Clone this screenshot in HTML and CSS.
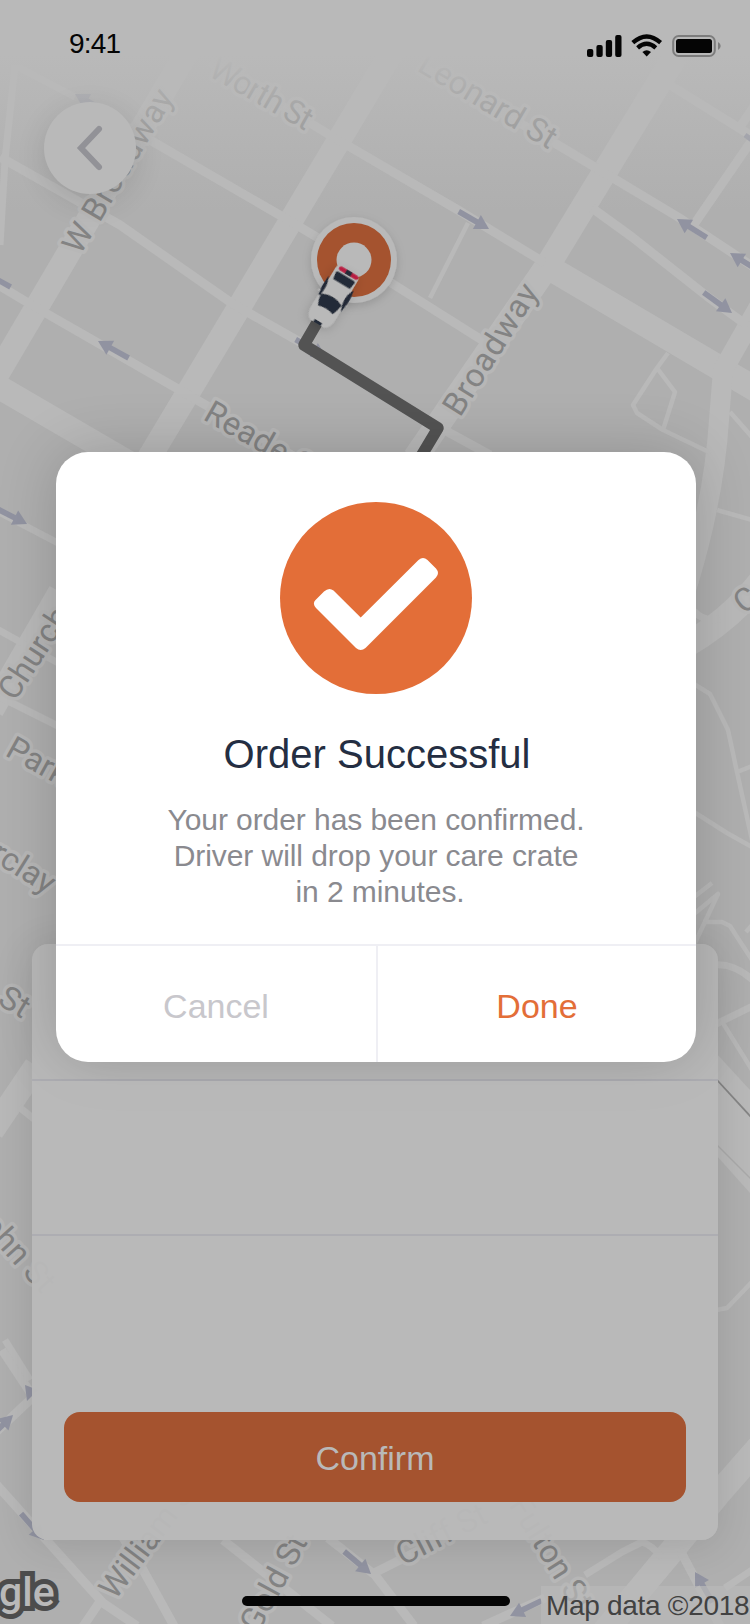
FILE: index.html
```html
<!DOCTYPE html>
<html lang="en">
<head>
<meta charset="utf-8">
<title>Order Successful</title>
<link rel="stylesheet" href="styles.css">
</head>
<body>
<div class="screen">
  <svg class="map" viewBox="0 0 750 1624" width="750" height="1624" aria-hidden="true">
    <defs>
      <g id="arrow"><path d="M-35 0H-10" stroke="#9193a1" stroke-width="5.6"/><path d="M0 0L-14 -8V8Z" fill="#9193a1"/></g>
      <linearGradient id="fade" x1="0" y1="0" x2="0" y2="1">
        <stop offset="0" stop-color="#b9b9b9"/><stop offset=".26" stop-color="#b9b9b9"/><stop offset="1" stop-color="#b9b9b9" stop-opacity="0"/>
      </linearGradient>
      <filter id="soft" x="-30%" y="-30%" width="160%" height="160%"><feDropShadow dx="0" dy="3" stdDeviation="5" flood-opacity=".15"/></filter>
    </defs>
    <rect width="750" height="1624" fill="#afafaf"/>
    <g class="roads">
      <path stroke-width="24" d="M190 47L-15 395M396 45L140 473M-20 376L150 475M60 592L-8 710M36 1066L-8 1131"/>
      <path stroke-width="25" d="M676 55L548 265L415 458M548 267L760 392M760 1446L718 1494L675 1547L600 1637"/>
      <path stroke-width="20" d="M765 296L723 370L719 420Q714 500 686 590"/>
      <path stroke-width="25" d="M685 646Q730 620 760 582"/>
      <path stroke-width="9" d="M0 157L120 225L233 304L300 342L448 432L490 455M85 103L150 140L283 217L330 245M385 279L485 342M-5 283L30 304L185 393L300 460M210 62L333 137L458 210L545 263M418 65L558 145L678 217L755 268M592 208L632 237L708 297L748 326M670 85L755 138M752 140L695 223M755 105L738 130M-5 1483L103 1603L137 1626M101 1600L82 1628M142 1568L174 1626M223 1540L332 1626M328 1538L375 1575L414 1626M372 1574L490 1515M680 1550L720 1626M483 1626L545 1598M2 1350L34 1398M-4 1432L32 1398"/>
      <path stroke-width="7" d="M15 65L5 160L0 245M18 67L75 97M-5 510L58 543M-5 628L60 664M0 697L60 727M5 1340L30 1380M19 1107L34 1119M715 965Q735 963 756 983M716 1024L755 1005M694 611Q703 622 720 619M725 1588L755 1568M122 1538L145 1572M585 1575L622 1552L642 1542Q652 1545 662 1558"/>
      <path stroke-width="4.5" d="M468 223L430 298M668 353L657 368L633 405L637 413L663 430L711 453M657 368L675 392L663 430M730 412L752 437M717 510L752 520M694 684L710 694L728 730L737 772L752 840M737 772L752 766M694 812L727 833L752 847M694 897L712 883M694 914L718 894L694 945M703 922H722L730 926L752 960M746 932L752 925M721 1020L752 1070M716 1310L727 1308L752 1282"/>
      <path stroke="none" fill="#b9b9b9" d="M716 1053L750 1090V1193L716 1155Z"/>
    </g>
    <path d="M717 1080L751 1117" stroke="#858585" stroke-width="1.8"/>
    <path d="M717 1145L751 1179" stroke="#a9a9a9" stroke-width="1.5"/>
    <g>
      <use href="#arrow" transform="translate(489 229) rotate(30)"/>
      <use href="#arrow" transform="translate(677 219) rotate(212)"/>
      <use href="#arrow" transform="translate(730 253) rotate(212)"/>
      <use href="#arrow" transform="translate(732 313) rotate(36)"/>
      <use href="#arrow" transform="translate(98 341) rotate(209)"/>
      <use href="#arrow" transform="translate(-20 270) rotate(209)"/>
      <use href="#arrow" transform="translate(27 524) rotate(27)"/>
      <use href="#arrow" transform="translate(75 94) rotate(210)"/>
      <use href="#arrow" transform="translate(326 357) rotate(30)"/>
      <use href="#arrow" transform="translate(371 1574) rotate(40)"/>
      <use href="#arrow" transform="translate(510 1616) rotate(154)"/>
      <use href="#arrow" transform="translate(695 1572) rotate(240)"/>
      <use href="#arrow" transform="translate(13 1415) rotate(-44)"/>
      <use href="#arrow" transform="translate(44 1540) rotate(49)"/>
      <path d="M25 1385L38 1390L27 1401Z" fill="#9193a1"/>
      <path d="M745 135L752 140" stroke="#9193a1" stroke-width="5"/>
    </g>
    <g class="labels">
      <text transform="translate(207 75) rotate(29.7)" textLength="113">Worth St</text>
      <text transform="translate(416 70) rotate(31)" textLength="155">Leonard St</text>
      <text transform="translate(80 256) rotate(-59.3)" textLength="185">W Broadway</text>
      <text transform="translate(460 418) rotate(-57.8)" textLength="149">Broadway</text>
      <text transform="translate(202 419) rotate(29.5)" textLength="130">Reade St</text>
      <text transform="translate(15 702) rotate(-57)">Church St</text>
      <text transform="translate(4 755) rotate(29)">Park Pl</text>
      <text transform="translate(47 895) rotate(32)" text-anchor="end">Barclay</text>
      <text transform="translate(22 1019) rotate(31)" text-anchor="end">St</text>
      <text transform="translate(-32 1213) rotate(48)">John St</text>
      <text transform="translate(115 1601) rotate(-53)">William St</text>
      <text transform="translate(258 1634) rotate(-61.5)">Gold St</text>
      <text transform="translate(403 1566) rotate(-27)">Cliff St</text>
      <text transform="translate(508 1505) rotate(58)">Fulton St</text>
      <text transform="translate(744 615) rotate(-38)">C</text>
    </g>
    <path d="M318 321L304 345L438 428L420 458" fill="none" stroke="#535353" stroke-width="11.5" stroke-linejoin="round"/>
    <circle cx="354" cy="260" r="43" fill="#b9b9b9" filter="url(#soft)"/>
    <circle cx="354" cy="260" r="37" fill="#a5532f"/>
    <circle cx="354" cy="260" r="17.5" fill="#b9b9b9"/>
    <g transform="translate(333 297) rotate(31) scale(1.08 1)" filter="url(#soft)">
      <path d="M-8 -31H8Q12 -31 12 -26L12 -5L13 16Q13 29 7 31H-7Q-13 29 -13 16L-12 -5L-12 -26Q-12 -31 -8 -31Z" fill="#b9b9b9"/>
      <path d="M-15 1H-12M12 1H15" stroke="#b9b9b9" stroke-width="2"/>
      <g fill="#212937">
        <path d="M-8 -24.500H9Q11 -24.500 10.500 -22L9.500 -15.500H-8.500L-9.500 -22Q-10 -24.500 -8 -24.500Z"/>
        <path d="M-11 3Q0 -3 11 3Q10 10 8 15Q0 12 -8 15Q-11 9 -11 3Z"/>
        <path d="M-13 -13Q-10 -6 -12 5Q-14 -4 -13 -13ZM13 -14Q15 -6 13 6Q9 -5 13 -14Z" stroke="#212937" stroke-width="1.5"/>
        <path d="M-4 28H4V31H-4Z"/>
      </g>
      <path d="M-7 -28.5H9" stroke="#b91f43" stroke-width="4.6" stroke-linecap="round"/>
      <path d="M-2 -28.5H4" stroke="#212937" stroke-width="4.6"/>
    </g>
    <rect width="750" height="210" fill="url(#fade)"/>
    <text class="google" x="-1" y="1606">gle</text>
  </svg>

  <div class="statusbar">
    <span class="time">9:41</span>
    <svg width="136" height="24" viewBox="0 0 136 24" aria-hidden="true">
      <g fill="#050505">
        <rect x="1" y="15" width="6.3" height="8" rx="2"/><rect x="10.4" y="11" width="6.3" height="12" rx="2"/><rect x="19.8" y="6" width="6.3" height="17" rx="2"/><rect x="29.2" y="1" width="6.3" height="22" rx="2"/>
        <path d="M60.7 22.4L56.4 18Q60.7 14.4 65 18Z"/>
        <rect x="90" y="5" width="36" height="14" rx="2.5"/>
      </g>
      <path d="M46.8 8.7Q60.7 -3.7 74.6 8.7M51.6 13.8Q60.7 5.8 69.8 13.8" fill="none" stroke="#050505" stroke-width="4.3"/>
      <rect x="87.2" y="2" width="41.6" height="20" rx="5.5" fill="none" stroke="#7d7d7d" stroke-width="2"/>
      <path d="M132 8Q134.7 9.5 134.7 12T132 16Z" fill="#7d7d7d"/>
    </svg>
  </div>

  <button class="back" aria-label="Back">
    <svg width="92" height="92" viewBox="0 0 92 92"><path d="M55 27L37 46L55 65" fill="none" stroke="#929297" stroke-width="6" stroke-linecap="round" stroke-linejoin="miter"/></svg>
  </button>

  <div class="sheet">
    <div class="sheet-head"></div>
    <div class="sheet-row"></div>
    <div class="sheet-foot"><button class="confirm">Confirm</button></div>
  </div>

  <div class="attribution">Map data ©2018</div>
  <div class="home"></div>

  <div class="modal" role="dialog">
    <div class="modal-body">
      <svg width="192" height="192" viewBox="0 0 192 192" aria-hidden="true">
        <circle cx="96" cy="96" r="96" fill="#e36e38"/>
        <path fill="#fff" d="M35.5 98L44 89.5Q49 85 53.5 88.5L80.7 115.5L138.5 58Q143 54 147.5 58L156 66.5Q160 71 156 75.5L85.5 146Q80.7 150 76 146L36 106Q32 101.500 35.5 98Z"/>
      </svg>
      <h1>Order Successful</h1>
      <p>Your order has been confirmed.<br>Driver will drop your care crate<br><span class="last-line">in 2 minutes.</span></p>
    </div>
    <div class="actions">
      <button class="cancel">Cancel</button>
      <button class="done">Done</button>
    </div>
  </div>
</div>
</body>
</html>
```
FILE: styles.css
```css
* { box-sizing: border-box; }

body {
  margin: 0;
  font-family: "Liberation Sans", Arial, sans-serif;
}

button {
  border: 0;
  padding: 0;
  background: none;
  font: inherit;
}

.screen {
  position: relative;
  width: 750px;
  height: 1624px;
  overflow: hidden;
  display: flex;
  flex-direction: column;
}

.map {
  position: absolute;
  inset: 0;
  z-index: -1;
}

.roads {
  fill: none;
  stroke: #b9b9b9;
  stroke-linejoin: round;
}

.labels {
  font-family: Roboto, sans-serif;
  font-size: 32.5px;
  fill: #838383;
  stroke: #b7b7b7;
  stroke-width: 7px;
  stroke-linejoin: round;
  paint-order: stroke;
}

.google {
  font-family: Roboto, sans-serif;
  font-weight: 500;
  font-size: 41px;
  fill: #b9b9b9;
  stroke: #4c4c4c;
  stroke-width: 10px;
  paint-order: stroke;
}

.statusbar {
  display: flex;
  justify-content: space-between;
  align-items: flex-start;
  height: 102px;
  padding: 34px 28px 0 69px;
  color: #050505;
}

.time {
  font-size: 28px;
  line-height: 20px;
  letter-spacing: -.8px;
}

.back {
  width: 92px;
  height: 92px;
  margin-left: 44px;
  border-radius: 50%;
  background: #b9b9b9;
  box-shadow: 0 8px 30px rgba(0, 0, 0, .12);
}

.back svg { display: block; }

.sheet {
  display: flex;
  flex-direction: column;
  height: 596px;
  margin: 750px 32px 0;
  border-radius: 16px;
  overflow: hidden;
  background: rgba(185, 185, 185, .96);
  box-shadow: 0 4px 40px rgba(0, 0, 0, .12);
}

.sheet-head {
  height: 137px;
  border-bottom: 2px solid #adadb2;
}

.sheet-row {
  position: relative;
  z-index: 1;
  height: 155px;
  border-bottom: 2px solid #adadb2;
  background: rgba(185, 185, 185, .85);
}

.sheet-foot {
  flex: 1;
  display: flex;
  align-items: flex-end;
  padding: 0 32px 38px;
}

.confirm {
  flex: 1;
  height: 90px;
  padding-top: 2px;
  border-radius: 16px;
  background: #a5532f;
  color: #b9b9b9;
  font-size: 34px;
}

.attribution {
  position: absolute;
  right: 0;
  bottom: 0;
  width: 209px;
  height: 38px;
  padding-left: 5px;
  background: rgba(185, 185, 185, .7);
  color: #424242;
  font-size: 28px;
  line-height: 39px;
  letter-spacing: -.3px;
  white-space: nowrap;
}

.home {
  width: 268px;
  height: 10px;
  margin: 56px 0 0 242px;
  border-radius: 5px;
  background: #050505;
}

.modal {
  position: absolute;
  left: 56px;
  top: 452px;
  width: 640px;
  height: 610px;
  display: flex;
  flex-direction: column;
  border-radius: 32px;
  background: #fff;
  box-shadow: 0 0 60px rgba(0, 0, 0, .18);
}

.modal-body {
  flex: 1;
  display: flex;
  flex-direction: column;
  align-items: center;
  padding-top: 50px;
  text-align: center;
}

.modal h1 {
  margin: 36px 0 24px;
  padding-left: 2px;
  color: #242e42;
  font-size: 40px;
  font-weight: 400;
  line-height: 48px;
}

.modal p {
  margin: 0;
  color: #8a8a8f;
  font-size: 30px;
  line-height: 36px;
  letter-spacing: -.07px;
}

.last-line { padding-left: 8px; }

.actions {
  display: flex;
  height: 118px;
  border-top: 2px solid #efeff4;
}

.actions button {
  flex: 1;
  padding-top: 4px;
  font-size: 34px;
}

.actions .cancel {
  flex: 0 0 322px;
  border-right: 2px solid #efeff4;
  color: #c8c7cc;
}

.actions .done { color: #e36e38; }
```
